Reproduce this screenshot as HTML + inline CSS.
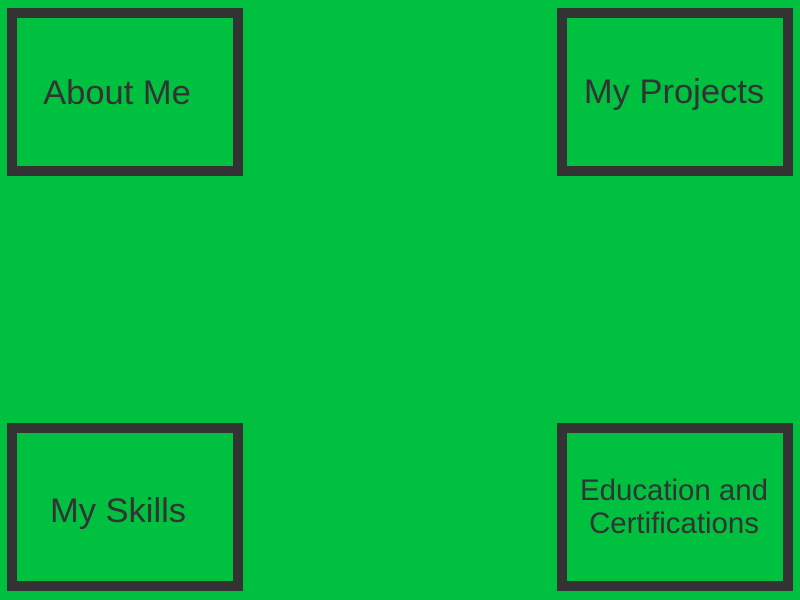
<!DOCTYPE html>
<html><head><style>
html,body{margin:0;padding:0;width:800px;height:600px;background:#00c13f;overflow:hidden;font-family:"Liberation Sans",sans-serif;color:#333}
.b{position:absolute;width:216px;height:148px;border:10px solid #333;box-sizing:content-box}
.t{position:absolute;white-space:nowrap;transform:translateX(-50%);line-height:1;font-size:34.5px;text-align:center}
</style></head><body>
<div class="b" style="left:7px;top:8px"></div>
<div class="b" style="left:557px;top:8px"></div>
<div class="b" style="left:7px;top:423px"></div>
<div class="b" style="left:557px;top:423px"></div>
<div class="t" style="left:117px;top:76px">About Me</div>
<div class="t" style="left:674px;top:75px">My Projects</div>
<div class="t" style="left:118px;top:494px">My Skills</div>
<div class="t" style="left:674px;top:474px;font-size:29.4px;line-height:33px">Education and<br>Certifications</div>
</body></html>
